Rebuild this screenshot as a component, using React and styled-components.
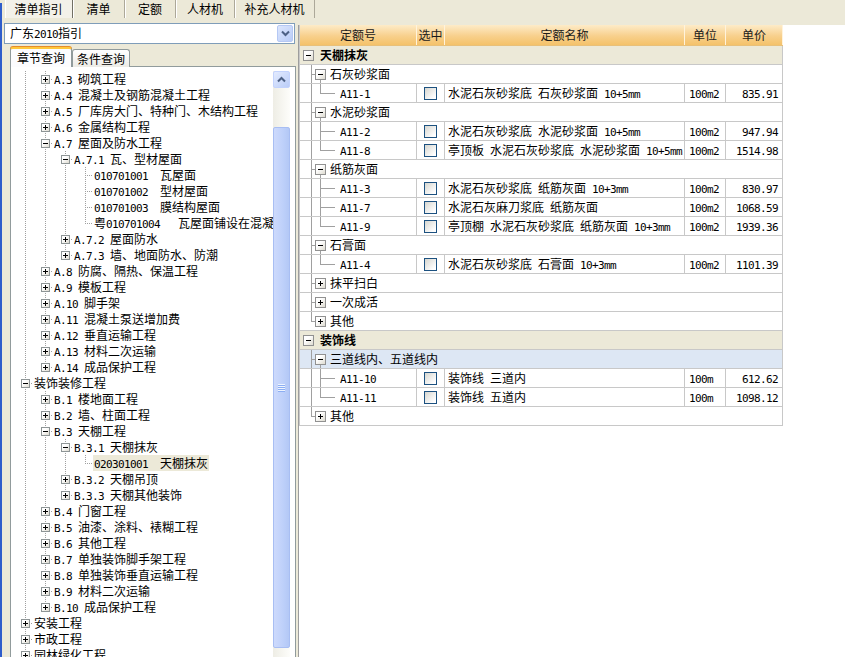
import React from 'react';
import styled, { createGlobalStyle, css } from 'styled-components';

const GlobalStyle = createGlobalStyle`
  html, body { margin: 0; padding: 0; overflow: hidden; background: #ECE9D8; }
  body { font-family: "Noto Sans CJK SC", "Noto Sans", sans-serif; font-size: 12px; color: #000; }
  * { box-sizing: border-box; }
`;

const LINE = '#A0A0A0';
const GRID = '#C8C8C8';

const Latin = styled.span`
  font-family: "DejaVu Sans Mono", "Liberation Mono", monospace;
  font-size: 11px;
  letter-spacing: -0.62px;
  white-space: pre;
`;

function Mixed({ text }) {
  const parts = text.match(/[\x20-\x7e]+|[^\x20-\x7e]+/g) || [];
  return parts.map((p, i) =>
    /^[\x20-\x7e]+$/.test(p) ? <Latin key={i}>{p}</Latin> : <React.Fragment key={i}>{p}</React.Fragment>
  );
}

/* ---------- connector guides (tree lines) ---------- */
const lineImg = (dotted, dir) =>
  dotted
    ? `repeating-linear-gradient(${dir}, ${LINE} 0 1px, transparent 1px 2px)`
    : `linear-gradient(${LINE}, ${LINE})`;

const Guide = styled.span`
  flex: none;
  display: flex;
  align-items: flex-start;
  align-self: stretch;
  width: ${(p) => p.$w}px;
  padding-left: ${(p) => p.$pad || 0}px;
  padding-top: ${(p) => p.$padTop || 0}px;
  ${(p) => {
    const v = lineImg(p.$dotted, 'to bottom');
    const h = lineImg(p.$dotted, 'to right');
    const layers = [];
    if (p.$top && p.$bottom) layers.push(`${v} ${p.$x}px 0 / 1px 100% no-repeat`);
    else if (p.$top) layers.push(`${v} ${p.$x}px 0 / 1px ${p.$c + 1}px no-repeat`);
    else if (p.$bottom) layers.push(`${v} ${p.$x}px ${p.$c}px / 1px calc(100% - ${p.$c}px) no-repeat`);
    if (p.$h) layers.push(`${h} ${p.$x}px ${p.$c}px / calc(100% - ${p.$x}px) 1px no-repeat`);
    return layers.length ? `background: ${layers.join(', ')};` : '';
  }}
`;

const ExpBox = styled.span`
  display: block;
  flex: none;
  width: ${(p) => p.$size}px;
  height: ${(p) => p.$size}px;
  border: 1px solid ${(p) => p.$border || '#919191'};
  background: linear-gradient(#000, #000) center / 5px 1px no-repeat,
    ${(p) => (p.$open ? '' : 'linear-gradient(#000, #000) center / 1px 5px no-repeat,')}
    linear-gradient(135deg, #ffffff 35%, #dedbd0);
`;

/* ---------- frame ---------- */
const Frame = styled.div`
  display: flex;
  width: 845px;
  height: 680px;
  background: #ECE9D8;
`;

const WindowEdge = styled.div`
  flex: none;
  width: 2px;
  margin-top: 3px;
  background: #2F5DCB;
`;

const Main = styled.div`
  flex: 1;
  min-width: 0;
  display: flex;
  flex-direction: column;
`;

const TabBar = styled.div`
  flex: none;
  display: flex;
  height: 19px;
  padding-left: 3px;
`;

const TopTab = styled.div`
  flex: none;
  width: ${(p) => p.$w}px;
  height: 18px;
  line-height: 17px;
  text-align: center;
  white-space: nowrap;
  border-right: 1px solid #ACA899;
  box-shadow: inset 1px 0 0 #FFFFFF;
  ${(p) =>
    p.$active &&
    css`
      border-right-color: #716F64;
      background: #F3F1E9;
    `}
`;

const Body = styled.div`
  flex: 1;
  min-height: 0;
  display: flex;
`;

/* ---------- left panel ---------- */
const LeftPanel = styled.div`
  flex: none;
  width: 296px;
  display: flex;
  flex-direction: column;
  padding: 4px 0 0 2px;
`;

const Combo = styled.div`
  flex: none;
  width: 291px;
  height: 21px;
  display: flex;
  align-items: center;
  background: #fff;
  border: 1px solid #7F9DB9;
  padding: 0 1px 0 5px;
`;

const ComboText = styled.div`
  flex: 1;
  line-height: 19px;
  white-space: nowrap;
`;

const DropBtn = styled.div`
  flex: none;
  width: 16px;
  height: 17px;
  display: flex;
  align-items: center;
  justify-content: center;
  border: 1px solid #B5C8F4;
  border-radius: 2px;
  background: linear-gradient(135deg, #DCE6FD, #B9CCF7);
`;

const PageTabs = styled.div`
  flex: none;
  display: flex;
  align-items: flex-end;
  height: 20px;
  margin-top: 3px;
  padding-left: 6px;
  position: relative;
  z-index: 1;
  margin-bottom: -1px;
`;

const PageTab = styled.div`
  flex: none;
  height: ${(p) => (p.$active ? 20 : 18)}px;
  padding: 0 ${(p) => (p.$active ? 6 : 4)}px;
  line-height: ${(p) => (p.$active ? 19 : 17)}px;
  border: 1px solid #919B9C;
  border-bottom: none;
  border-radius: 3px 3px 0 0;
  white-space: nowrap;
  background: ${(p) => (p.$active ? '#FCFCFE' : 'linear-gradient(#FFFFFF, #ECEBE6)')};
  ${(p) =>
    p.$active &&
    css`
      border-top: 2px solid #FFC83C;
      box-shadow: 0 -1px 0 #E68B2C;
      line-height: 18px;
    `}
`;

const TreeBox = styled.div`
  flex: 1;
  min-height: 0;
  width: 286px;
  margin-left: 6px;
  display: flex;
  background: #fff;
  border: 1px solid #919B9C;
  border-bottom: none;
  padding: 4px 5px 0 0;
`;

const TreeView = styled.div`
  flex: 1;
  min-width: 0;
  overflow: hidden;
  padding-left: 4px;
`;

const TreeRow = styled.div`
  display: flex;
  height: 16px;
  line-height: 16px;
  white-space: nowrap;
`;

const TreeLabel = styled.span`
  flex: none;
  padding: 0 1px;
  background: ${(p) => (p.$selected ? '#ECE9D8' : 'transparent')};
`;

const ScrollBar = styled.div`
  flex: none;
  width: 17px;
  display: flex;
  flex-direction: column;
  background: linear-gradient(to right, #EEEDE5, #FDFDFA);
`;

const ScrollBtn = styled.div`
  flex: none;
  height: 17px;
  display: flex;
  align-items: center;
  justify-content: center;
  border: 1px solid #C3D3FD;
  border-radius: 2px;
  background: linear-gradient(135deg, #E3EBFE, #BACDF8);
`;

const Track = styled.div`
  flex: 1;
  min-height: 0;
  padding-top: 39px;
`;

const Thumb = styled.div`
  height: 521px;
  display: flex;
  align-items: center;
  justify-content: center;
  border: 1px solid #A8BEF3;
  border-radius: 2px;
  background: linear-gradient(to right, #CDDAFC, #BED0FA 60%, #B3C8F6);
`;

const Grip = styled.div`
  width: 7px;
  height: 8px;
  background: repeating-linear-gradient(to bottom, #EEF4FE 0 1px, #8CAEF3 1px 2px);
`;

/* ---------- right panel ---------- */
const RightPanel = styled.div`
  flex: 1;
  min-width: 0;
  display: flex;
  flex-direction: column;
  padding-top: 6px;
`;

const TableArea = styled.div`
  flex: 1;
  background: #fff;
  border-left: 1px solid #9D9D9D;
`;

const COLS = '117px 28px 240px 41px 57px';

const Table = styled.div`
  width: 484px;
  border-left: 1px solid ${GRID};
`;

const HeaderRow = styled.div`
  display: grid;
  grid-template-columns: ${COLS};
  height: 21px;
  background: linear-gradient(#FDEBC8, #F8D08C 55%, #F4C26A);
  border-bottom: 1px solid #E8C07A;
`;

const HeadCell = styled.div`
  text-align: center;
  line-height: 19px;
  border-right: 1px solid #FFF3DC;
  color: #1a1a1a;
`;

const Row = styled.div`
  display: grid;
  grid-template-columns: ${COLS};
  height: 19px;
  border-bottom: 1px solid ${GRID};
  background: ${(p) => (p.$kind === 'group' ? '#ECE9D8' : p.$selected ? '#DDE7F4' : '#fff')};
  font-weight: ${(p) => (p.$kind === 'group' ? 700 : 400)};
`;

const SpanCell = styled.div`
  grid-column: 1 / -1;
  display: flex;
  height: 18px;
  line-height: 18px;
  white-space: nowrap;
  border-right: 1px solid ${GRID};
  padding-left: ${(p) => p.$pad || 0}px;
`;

const Cell = styled.div`
  display: flex;
  justify-content: ${(p) => (p.$align === 'right' ? 'flex-end' : p.$align === 'center' ? 'center' : 'flex-start')};
  align-items: ${(p) => (p.$align === 'center' ? 'center' : 'stretch')};
  height: 18px;
  line-height: 18px;
  white-space: nowrap;
  overflow: hidden;
  border-right: 1px solid ${GRID};
  padding: 0 ${(p) => p.$pr || 0}px 0 ${(p) => p.$pl || 0}px;
`;

const CellText = styled.span`
  padding-left: ${(p) => p.$pl || 0}px;
`;

const GroupBoxSlot = styled.span`
  flex: none;
  padding-top: 4px;
  margin-right: 6px;
`;

const SubBoxSlot = styled.span`
  flex: none;
  width: 11px;
  padding-top: 4px;
  margin-right: 4px;
  ${(p) => p.$open && `background: linear-gradient(${LINE}, ${LINE}) 5px 15px / 1px 3px no-repeat;`}
`;

const Check = styled.span`
  display: block;
  width: 13px;
  height: 13px;
  border: 1px solid #1C5180;
  background: linear-gradient(135deg, #D6D6D0, #FFFFFF 85%);
`;

/* ---------- data ---------- */
const topTabs = [
  { label: '清单指引', w: 68, active: true },
  { label: '清单', w: 52 },
  { label: '定额', w: 51 },
  { label: '人材机', w: 59 },
  { label: '补充人材机', w: 80 },
];

const tree = [
  { l: 2, t: 'A.3 砌筑工程', s: '+' },
  { l: 2, t: 'A.4 混凝土及钢筋混凝土工程', s: '+' },
  { l: 2, t: 'A.5 厂库房大门、特种门、木结构工程', s: '+' },
  { l: 2, t: 'A.6 金属结构工程', s: '+' },
  { l: 2, t: 'A.7 屋面及防水工程', s: '-' },
  { l: 3, t: 'A.7.1 瓦、型材屋面', s: '-' },
  { l: 4, t: '010701001  瓦屋面' },
  { l: 4, t: '010701002  型材屋面' },
  { l: 4, t: '010701003  膜结构屋面' },
  { l: 4, t: '粤010701004   瓦屋面铺设在混凝土上' },
  { l: 3, t: 'A.7.2 屋面防水', s: '+' },
  { l: 3, t: 'A.7.3 墙、地面防水、防潮', s: '+' },
  { l: 2, t: 'A.8 防腐、隔热、保温工程', s: '+' },
  { l: 2, t: 'A.9 模板工程', s: '+' },
  { l: 2, t: 'A.10 脚手架', s: '+' },
  { l: 2, t: 'A.11 混凝土泵送增加费', s: '+' },
  { l: 2, t: 'A.12 垂直运输工程', s: '+' },
  { l: 2, t: 'A.13 材料二次运输', s: '+' },
  { l: 2, t: 'A.14 成品保护工程', s: '+' },
  { l: 1, t: '装饰装修工程', s: '-' },
  { l: 2, t: 'B.1 楼地面工程', s: '+' },
  { l: 2, t: 'B.2 墙、柱面工程', s: '+' },
  { l: 2, t: 'B.3 天棚工程', s: '-' },
  { l: 3, t: 'B.3.1 天棚抹灰', s: '-' },
  { l: 4, t: '020301001  天棚抹灰', sel: true },
  { l: 3, t: 'B.3.2 天棚吊顶', s: '+' },
  { l: 3, t: 'B.3.3 天棚其他装饰', s: '+' },
  { l: 2, t: 'B.4 门窗工程', s: '+' },
  { l: 2, t: 'B.5 油漆、涂料、裱糊工程', s: '+' },
  { l: 2, t: 'B.6 其他工程', s: '+' },
  { l: 2, t: 'B.7 单独装饰脚手架工程', s: '+' },
  { l: 2, t: 'B.8 单独装饰垂直运输工程', s: '+' },
  { l: 2, t: 'B.9 材料二次运输', s: '+' },
  { l: 2, t: 'B.10 成品保护工程', s: '+' },
  { l: 1, t: '安装工程', s: '+' },
  { l: 1, t: '市政工程', s: '+' },
  { l: 1, t: '园林绿化工程', s: '+' },
  { l: 1, t: '仿古建筑工程', s: '+' },
];

function continues(list, i, level) {
  for (let j = i + 1; j < list.length; j++) {
    if (list[j].l < level) return false;
    if (list[j].l === level) return true;
  }
  return false;
}

const groups = [
  {
    label: '天棚抹灰',
    subs: [
      { label: '石灰砂浆面', items: [['A11-1', '水泥石灰砂浆底 石灰砂浆面 10+5mm', '100m2', '835.91']] },
      {
        label: '水泥砂浆面',
        items: [
          ['A11-2', '水泥石灰砂浆底 水泥砂浆面 10+5mm', '100m2', '947.94'],
          ['A11-8', '亭顶板 水泥石灰砂浆底 水泥砂浆面 10+5mm', '100m2', '1514.98'],
        ],
      },
      {
        label: '纸筋灰面',
        items: [
          ['A11-3', '水泥石灰砂浆底 纸筋灰面 10+3mm', '100m2', '830.97'],
          ['A11-7', '水泥石灰麻刀浆底 纸筋灰面', '100m2', '1068.59'],
          ['A11-9', '亭顶棚 水泥石灰砂浆底 纸筋灰面 10+3mm', '100m2', '1939.36'],
        ],
      },
      { label: '石膏面', items: [['A11-4', '水泥石灰砂浆底 石膏面 10+3mm', '100m2', '1101.39']] },
      { label: '抹平扫白' },
      { label: '一次成活' },
      { label: '其他' },
    ],
  },
  {
    label: '装饰线',
    subs: [
      {
        label: '三道线内、五道线内',
        selected: true,
        items: [
          ['A11-10', '装饰线 三道内', '100m', '612.62'],
          ['A11-11', '装饰线 五道内', '100m', '1098.12'],
        ],
      },
      { label: '其他' },
    ],
  },
];

/* ---------- pieces ---------- */
const Chevron = ({ up }) => (
  <svg width="9" height="7" viewBox="0 0 9 7">
    <path d={up ? 'M1 5.5 L4.5 2 L8 5.5' : 'M1 1.5 L4.5 5 L8 1.5'} fill="none" stroke="#4D6185" strokeWidth="2" />
  </svg>
);

function LeftTree() {
  return (
    <TreeView>
      {tree.map((n, i) => {
        const guides = [];
        for (let k = 1; k < n.l; k++) {
          guides.push(<Guide key={k} $w={20} $x={10} $c={8} $dotted $top={continues(tree, i, k)} $bottom={continues(tree, i, k)} />);
        }
        const leaf = !n.s;
        return (
          <TreeRow key={i}>
            {guides}
            <Guide $w={18} $x={10} $c={8} $dotted $top $bottom={continues(tree, i, n.l)} $h $pad={6} $padTop={4}>
              {!leaf && <ExpBox $size={9} $open={n.s === '-'} $border="#8E9596" />}
            </Guide>
            <TreeLabel $selected={n.sel}>
              <Mixed text={n.t} />
            </TreeLabel>
          </TreeRow>
        );
      })}
    </TreeView>
  );
}

function DataTable() {
  const rows = [];
  groups.forEach((g, gi) => {
    rows.push(
      <Row key={`g${gi}`} $kind="group">
        <SpanCell $pad={3}>
          <GroupBoxSlot>
            <ExpBox $size={11} $open />
          </GroupBoxSlot>
          {g.label}
        </SpanCell>
      </Row>
    );
    g.subs.forEach((s, si) => {
      const last = si === g.subs.length - 1;
      const open = !!s.items;
      rows.push(
        <Row key={`s${gi}-${si}`} $kind="sub" $selected={s.selected}>
          <SpanCell>
            <Guide $w={15} $x={11} $c={9} $top $bottom={!last} $h />
            <SubBoxSlot $open={open}>
              <ExpBox $size={11} $open={open} />
            </SubBoxSlot>
            {s.label}
          </SpanCell>
        </Row>
      );
      (s.items || []).forEach((it, ii) => {
        const lastLeaf = ii === s.items.length - 1;
        rows.push(
          <Row key={`l${gi}-${si}-${ii}`} $kind="leaf">
            <Cell>
              <Guide $w={15} $x={11} $c={9} $top={!last} $bottom={!last} />
              <Guide $w={20} $x={5} $c={9} $top $bottom={!lastLeaf} $h />
              <CellText $pl={5}>
                <Mixed text={it[0]} />
              </CellText>
            </Cell>
            <Cell $align="center">
              <Check />
            </Cell>
            <Cell $pl={3}>
              <span>
                <Mixed text={it[1]} />
              </span>
            </Cell>
            <Cell $pl={4}>
              <span>
                <Mixed text={it[2]} />
              </span>
            </Cell>
            <Cell $align="right" $pr={4}>
              <span>
                <Mixed text={it[3]} />
              </span>
            </Cell>
          </Row>
        );
      });
    });
  });

  return (
    <Table>
      <HeaderRow>
        <HeadCell>定额号</HeadCell>
        <HeadCell>选中</HeadCell>
        <HeadCell>定额名称</HeadCell>
        <HeadCell>单位</HeadCell>
        <HeadCell>单价</HeadCell>
      </HeaderRow>
      {rows}
    </Table>
  );
}

export default function App() {
  return (
    <>
      <GlobalStyle />
      <Frame>
        <WindowEdge />
        <Main>
          <TabBar>
            {topTabs.map((t) => (
              <TopTab key={t.label} $w={t.w} $active={t.active}>
                {t.label}
              </TopTab>
            ))}
          </TabBar>
          <Body>
            <LeftPanel>
              <Combo>
                <ComboText>
                  <Mixed text="广东2010指引" />
                </ComboText>
                <DropBtn>
                  <Chevron />
                </DropBtn>
              </Combo>
              <PageTabs>
                <PageTab $active>章节查询</PageTab>
                <PageTab>条件查询</PageTab>
              </PageTabs>
              <TreeBox>
                <LeftTree />
                <ScrollBar>
                  <ScrollBtn>
                    <Chevron up />
                  </ScrollBtn>
                  <Track>
                    <Thumb>
                      <Grip />
                    </Thumb>
                  </Track>
                  <ScrollBtn>
                    <Chevron />
                  </ScrollBtn>
                </ScrollBar>
              </TreeBox>
            </LeftPanel>
            <RightPanel>
              <TableArea>
                <DataTable />
              </TableArea>
            </RightPanel>
          </Body>
        </Main>
      </Frame>
    </>
  );
}
